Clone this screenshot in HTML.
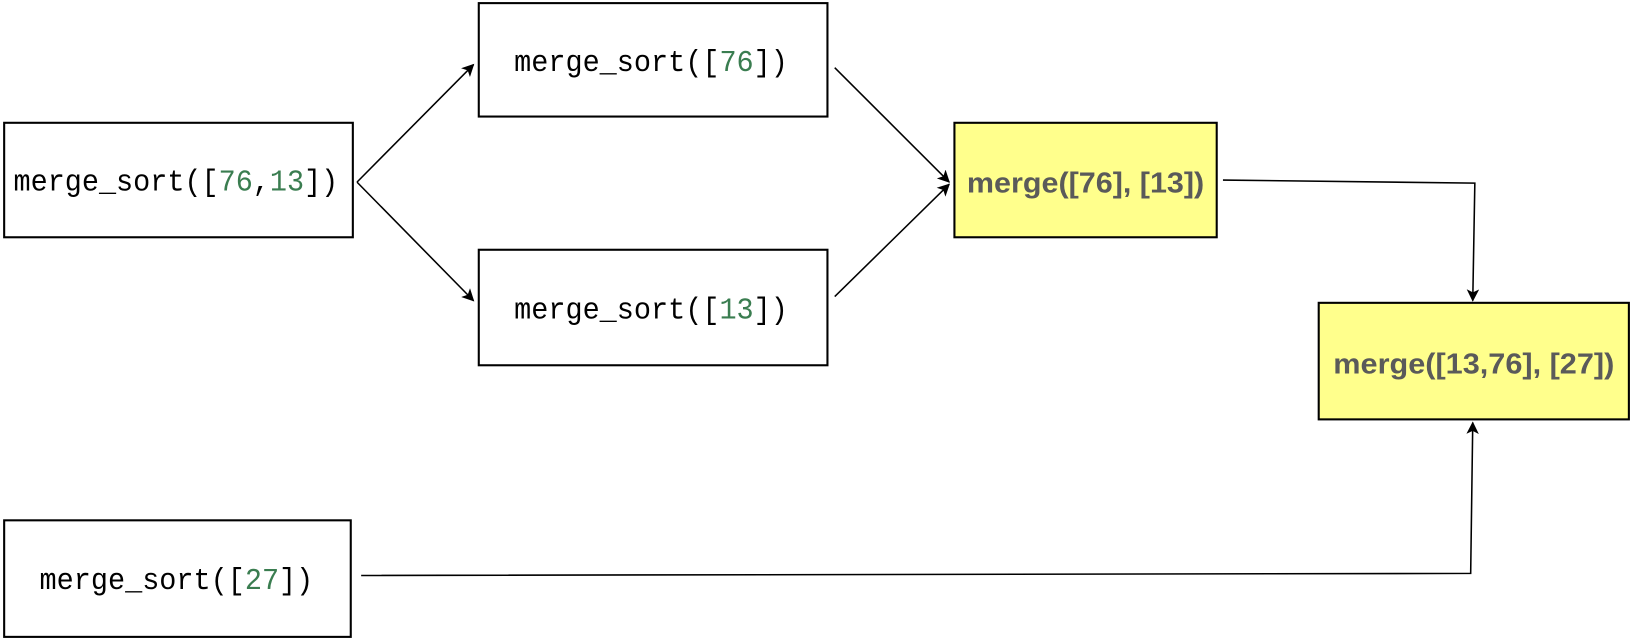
<!DOCTYPE html>
<html><head><style>body{margin:0;background:#fff}svg{display:block}</style></head><body>
<svg width="1632" height="640" viewBox="0 0 1568 615" preserveAspectRatio="none" xmlns="http://www.w3.org/2000/svg">
<defs><marker id="a" markerWidth="12" markerHeight="12" refX="11" refY="6" orient="auto" markerUnits="userSpaceOnUse"><path d="M0,0 L12,6 L0,12 L3,6 Z" fill="#000"/></marker></defs>
<g fill="#fff" stroke="#000" stroke-width="2">
<rect x="4" y="118" width="335" height="110"/>
<rect x="460" y="3" width="335" height="109"/>
<rect x="460" y="240" width="335" height="111"/>
<rect x="4" y="500" width="333" height="112"/>
<rect x="917" y="118" width="252" height="110" fill="#ffff8c"/>
<rect x="1267" y="291" width="298" height="112" fill="#ffff8c"/>
</g>
<g fill="none" stroke="#000" stroke-width="1.5" marker-end="url(#a)">
<path d="M343,175 L455,62"/>
<path d="M343,175 L455,289"/>
<path d="M802,65 L912,175"/>
<path d="M802,285 L912,177"/>
<path d="M1175,173 L1417,176 L1415,289"/>
<path d="M347,553 L1413,551 L1415,406"/>
</g>
<g font-family="Liberation Mono, monospace" font-size="29" fill="#000">
<text x="13" y="183" textLength="312" lengthAdjust="spacingAndGlyphs">merge_sort([<tspan fill="#3a7d50">76</tspan>,<tspan fill="#3a7d50">13</tspan>])</text>
<text x="494" y="68" textLength="263" lengthAdjust="spacingAndGlyphs">merge_sort([<tspan fill="#3a7d50">76</tspan>])</text>
<text x="494" y="306" textLength="263" lengthAdjust="spacingAndGlyphs">merge_sort([<tspan fill="#3a7d50">13</tspan>])</text>
<text x="38" y="566" textLength="263" lengthAdjust="spacingAndGlyphs">merge_sort([<tspan fill="#3a7d50">27</tspan>])</text>
</g>
<g font-family="Liberation Sans, sans-serif" font-weight="bold" font-size="28" fill="#5a5a5a">
<text x="929" y="185" textLength="228" lengthAdjust="spacingAndGlyphs">merge([76], [13])</text>
<text x="1281" y="359" textLength="270" lengthAdjust="spacingAndGlyphs">merge([13,76], [27])</text>
</g>
</svg>
</body></html>
